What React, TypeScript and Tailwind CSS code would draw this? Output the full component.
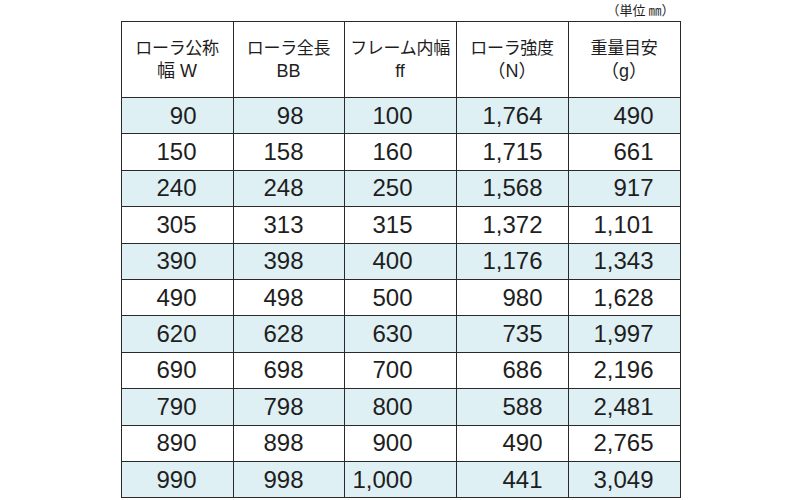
const rows = [
  ['90', '98', '100', '1,764', '490'],
  ['150', '158', '160', '1,715', '661'],
  ['240', '248', '250', '1,568', '917'],
  ['305', '313', '315', '1,372', '1,101'],
  ['390', '398', '400', '1,176', '1,343'],
  ['490', '498', '500', '980', '1,628'],
  ['620', '628', '630', '735', '1,997'],
  ['690', '698', '700', '686', '2,196'],
  ['790', '798', '800', '588', '2,481'],
  ['890', '898', '900', '490', '2,765'],
  ['990', '998', '1,000', '441', '3,049'],
];

const headers = [
  ['ローラ公称', '幅 W'],
  ['ローラ全長', 'BB'],
  ['フレーム内幅', 'ff'],
  ['ローラ強度', '（N）'],
  ['重量目安', '（g）'],
];

// right padding per column so the figures line up like the original
const pads = ['pr-[36px]', 'pr-[40px]', 'pr-[43px]', 'pr-[25px]', 'pr-[26px]'];

export default function App() {
  return (
    <div className="w-[800px] h-[500px] bg-white text-[#1e1e1e] font-['Liberation_Sans','Noto_Sans_CJK_JP',sans-serif]">
      <div className="mx-auto w-[559px]">
        <div className="h-[21px] pr-[5px] text-right text-[13px] leading-[20px] font-['Noto_Sans_CJK_JP',sans-serif]">
          （単位 ㎜）
        </div>
        <table className="w-[559px] table-fixed border-collapse border-[1.5px] border-[#2a2a2a]">
          <colgroup>
            <col className="w-[112px]" />
            <col className="w-[111px]" />
            <col className="w-[112px]" />
            <col className="w-[112px]" />
            <col className="w-[112px]" />
          </colgroup>
          <thead>
            <tr className="h-[76px]">
              {headers.map((h, i) => (
                <th
                  key={i}
                  className="border border-[#2a2a2a] text-center align-middle font-normal text-[17px] leading-[22px] font-['Liberation_Sans','Noto_Sans_CJK_JP',sans-serif] whitespace-nowrap px-0"
                >
                  <div className="tracking-[-0.3px]">{h[0]}</div>
                  <div className="text-[18px]">{h[1]}</div>
                </th>
              ))}
            </tr>
          </thead>
          <tbody>
            {rows.map((r, ri) => (
              <tr key={ri} className={ri % 2 === 0 ? 'h-[36.4px] bg-[#dff0f4]' : 'h-[36.4px] bg-white'}>
                {r.map((v, ci) => (
                  <td
                    key={ci}
                    className={`border border-[#2a2a2a] text-right align-middle text-[24px] leading-[28px] ${pads[ci]}`}
                  >
                    {v}
                  </td>
                ))}
              </tr>
            ))}
          </tbody>
        </table>
      </div>
    </div>
  );
}
